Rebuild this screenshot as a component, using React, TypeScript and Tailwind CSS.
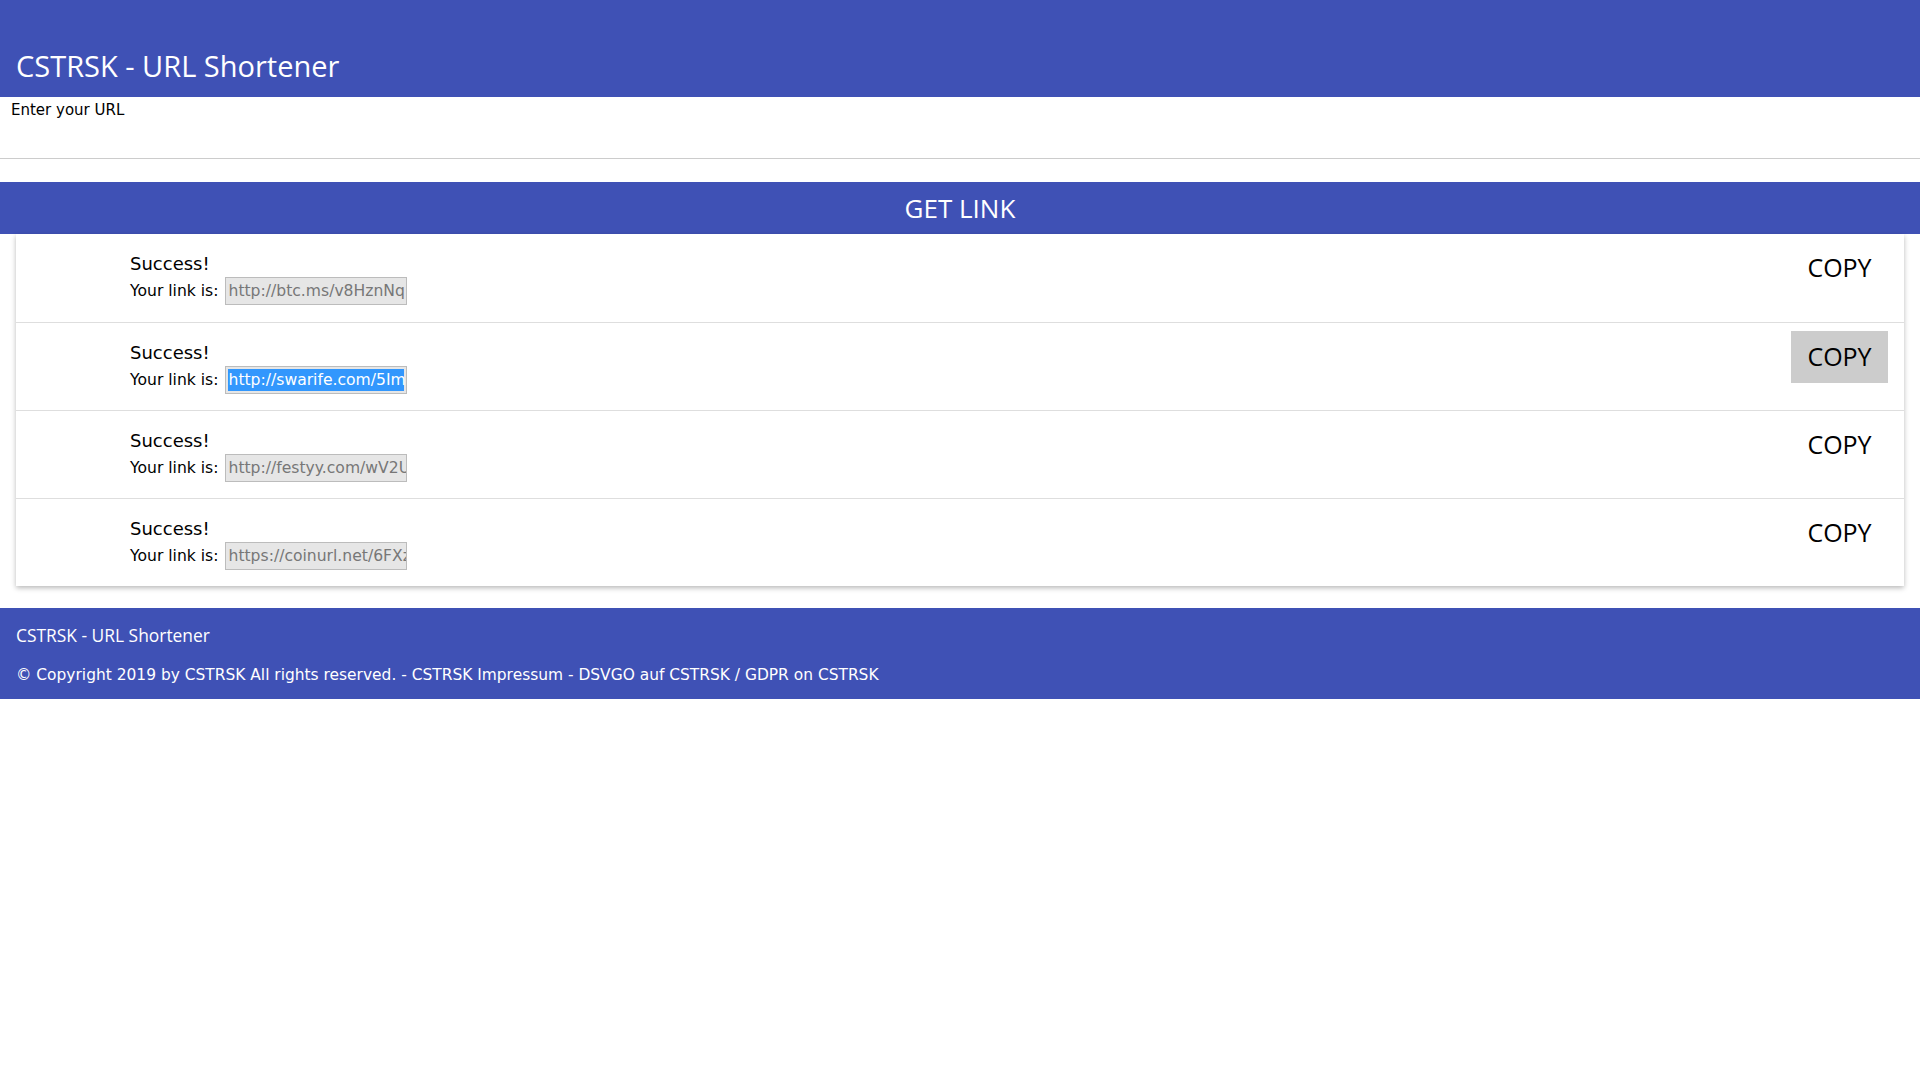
import { useState } from "react";

const SANS = "font-['Open_Sans','Noto_Sans',sans-serif]";
const VERD = "font-['DejaVu_Sans','Verdana',sans-serif]";

interface LinkResult {
  url: string;
  selected?: boolean;
  hovered?: boolean;
}

const RESULTS: LinkResult[] = [
  { url: "http://btc.ms/v8HznNq" },
  { url: "http://swarife.com/5ImQx", selected: true, hovered: true },
  { url: "http://festyy.com/wV2Uk" },
  { url: "https://coinurl.net/6FXz" },
];

function ResultRow({ item, first }: { item: LinkResult; first: boolean }) {
  return (
    <div className={`flex justify-between h-[88px] ${first ? "" : "border-t border-[#dedede]"}`}>
      {/* Message */}
      <div className={`pl-[114px] pt-[19px] text-black ${VERD}`}>
        <div className="text-[18px] leading-[22px]">Success!</div>
        <div className="flex items-center mt-[2px] text-[15.6px]">
          <span className="leading-[18px]">Your link is:</span>
          <div className="ml-[6px] w-[182px] h-[28px] border border-[#bcbcbc] bg-[#e6e6e6] px-[2px] py-[2px] overflow-hidden whitespace-nowrap">
            {item.selected ? (
              <span className="block h-full bg-[#3297fd] text-white leading-[22px] pl-px">{item.url}</span>
            ) : (
              <span className="block h-full text-[#777777] leading-[22px] pl-px">{item.url}</span>
            )}
          </div>
        </div>
      </div>

      {/* Copy */}
      <button
        className={`self-start mt-[8px] mr-[16px] w-[97px] h-[52px] text-[25px] text-black ${SANS} ${
          item.hovered ? "bg-[#cccccc]" : "bg-transparent"
        }`}
      >
        COPY
      </button>
    </div>
  );
}

export default function App() {
  const [url, setUrl] = useState("");

  return (
    <div className="w-full bg-white">
      {/* Header */}
      <header className="h-[97px] bg-[#3f51b5] pl-4 pt-[46px]">
        <h1 className={`text-white text-[29px] leading-[40px] ${SANS}`}>CSTRSK - URL Shortener</h1>
      </header>

      {/* Form */}
      <div className={`pt-[4px] pl-[11px] text-[15px] leading-[18px] text-black ${VERD}`}>Enter your URL</div>
      <input
        value={url}
        onChange={(e) => setUrl(e.target.value)}
        className={`block w-full h-[40px] border-b border-[#cccccc] outline-none px-[11px] text-[15px] ${VERD}`}
      />
      <button className={`mt-[23px] block w-full h-[52px] bg-[#3f51b5] text-white text-[26px] ${SANS}`}>GET LINK</button>

      {/* Results */}
      <div className="mx-4 bg-white shadow-[0_2px_5px_rgba(0,0,0,0.28)]">
        {RESULTS.map((item, i) => (
          <ResultRow key={i} item={item} first={i === 0} />
        ))}
      </div>

      {/* Footer */}
      <footer className="mt-[22px] h-[91px] bg-[#3f51b5] pl-4 pt-[15px] text-white">
        <div className={`text-[17.4px] leading-[24px] ${SANS}`}>CSTRSK - URL Shortener</div>
        <div className={`mt-[19px] text-[15.45px] leading-[18px] ${VERD}`}>
          © Copyright 2019 by CSTRSK All rights reserved. - CSTRSK Impressum - DSVGO auf CSTRSK / GDPR on CSTRSK
        </div>
      </footer>
    </div>
  );
}
